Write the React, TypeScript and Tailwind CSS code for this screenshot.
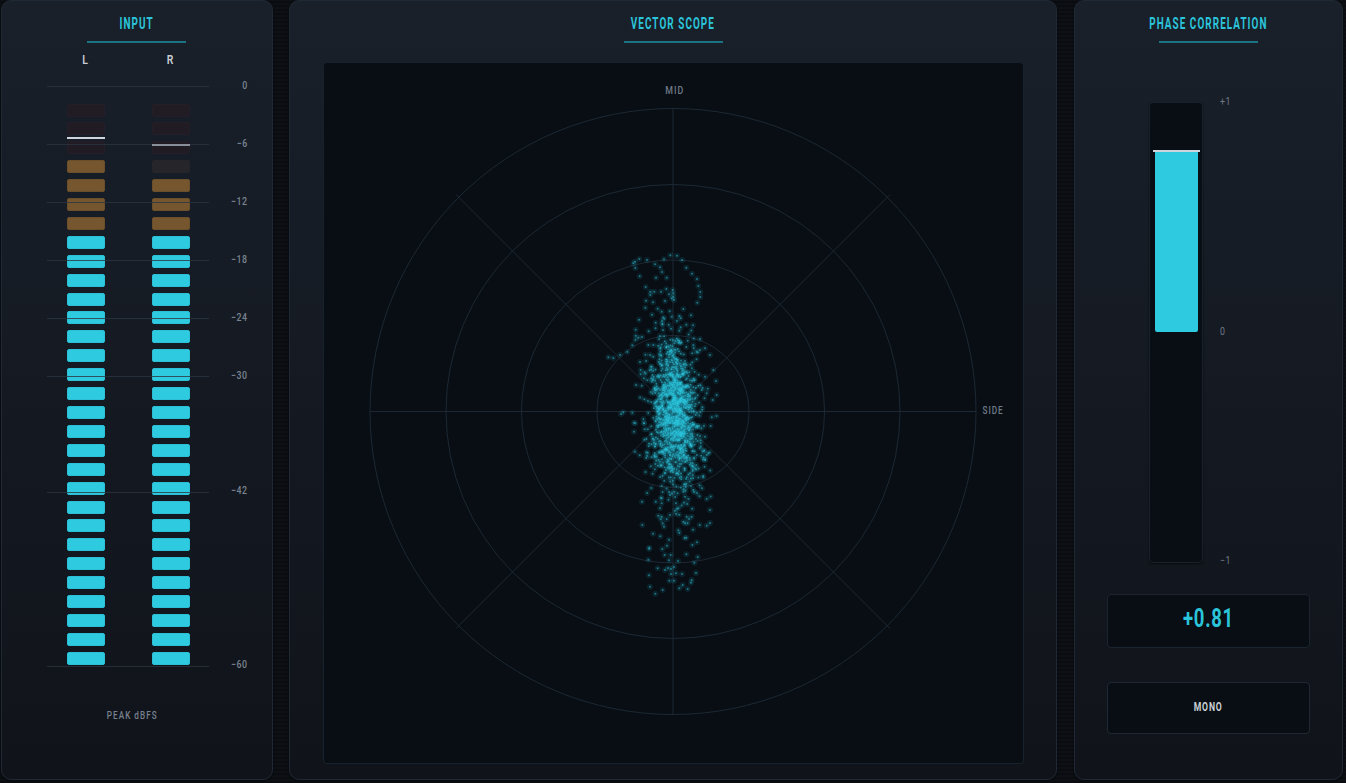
import React from "react";

const up: [number, number][] = [[130,70],[135,65],[148,57],[171,60],[136,84],[222,58],[241,46],[261,47],[276,60],[195,73],[210,82],[216,96],[198,113],[230,113],[149,109],[289,83],[306,101],[321,117],[325,138],[331,156],[331,171],[322,188],[167,141],[181,155],[181,165],[193,155],[213,155],[229,147],[237,163],[248,150],[250,160],[250,170],[252,180],[245,175],[225,183],[168,182],[189,187],[166,203],[203,206],[215,215],[239,214],[280,207],[186,224],[268,228],[272,235],[303,226],[147,239],[223,236],[216,243],[197,248],[236,254],[289,254],[309,256],[272,262],[268,272],[137,269],[176,274],[219,270],[137,287],[145,293],[156,291],[136,300],[127,316],[112,336],[90,345],[55,352],[70,354],[150,366],[152,390],[152,403],[185,380],[190,392],[155,437],[172,421],[185,425],[330,297],[360,345],[370,390],[378,423],[380,465],[368,480],[100,517],[127,518],[93,522],[310,315],[345,325],[330,330],[320,335],[180,345],[190,350],[175,315],[190,315],[345,410],[335,450],[350,460]];
const down: [number, number][] = [[156,245],[157,315],[189,341],[211,349],[237,359],[178,383],[177,386],[217,387],[231,377],[224,405],[242,405],[175,419],[237,421],[264,423],[289,403],[323,411],[313,428],[307,375],[321,367],[284,354],[289,353],[265,331],[268,339],[309,329],[329,315],[350,317],[360,309],[350,237],[360,270],[203,445],[225,450],[234,444],[243,447],[252,441],[243,462],[258,460],[276,462],[318,459],[177,466],[238,482],[252,482],[305,480],[303,488],[278,495],[268,505],[293,507],[180,500],[218,510],[196,521],[305,290],[290,290],[280,305],[285,310],[293,310],[297,297],[215,290],[212,298],[218,310],[222,320],[230,298],[240,285],[258,282],[268,284],[210,265],[215,250],[215,235],[240,225],[258,250],[265,265],[292,252],[285,230],[263,220],[280,215],[310,210],[336,205],[340,172],[350,105],[342,92],[345,50],[342,17],[135,95],[132,35],[132,8]];

function makeDots() {
  let s = 12345;
  const r = () => {
    s = (s * 1664525 + 1013904223) >>> 0;
    return s / 4294967296;
  };
  const g = () => (r() + r() + r() + r() - 2) * 1.73;
  const pts: [number, number][] = [];
  up.forEach(([x, y]) => pts.push([590 + x / 3, 240 + y / 3]));
  down.forEach(([x, y]) => pts.push([590 + x / 3, 420 + y / 3]));
  const add = (n: number, mx: number, my: number, sx: number, sy: number) => {
    for (let i = 0; i < n; i++) {
      const x = mx + g() * sx;
      const y = my + g() * sy;
      if (Math.abs(x - 675) < 43) pts.push([x, y]);
    }
  };
  add(620, 675, 415, 12, 24);
  add(210, 672, 368, 10, 18);
  add(240, 678, 458, 14, 20);
  add(110, 675, 412, 19, 24);
  return pts;
}
const dots = makeDots();

function seg(i: number, ch: "L" | "R") {
  if (i < 3) return "bg-[#211c24] border-[#231e27]";
  if (i === 3) {
    return ch === "L" ? "bg-[#75562e] border-[#6b4f2b]" : "bg-[#25252a] border-[#25252a]";
  }
  if (i < 7) return "bg-[#75562e] border-[#6b4f2b]";
  return "bg-[#2dcae0] border-[#2bc0d6]";
}

function Column({ ch }: { ch: "L" | "R" }) {
  return (
    <div className="flex flex-col gap-[5.92px] w-[38px]">
      {Array.from({ length: 30 }).map((_, i) => (
        <div key={i} className={`h-[13px] rounded-[2px] border ${seg(i, ch)}`} />
      ))}
    </div>
  );
}

function Title({ children }: { children: React.ReactNode }) {
  return (
    <div className="flex flex-col items-center pt-[14px]">
      <div className="h-[18px] text-[16px] leading-[18px] font-bold tracking-[1.7px] text-[#2bc4da] whitespace-nowrap scale-x-[0.62]">{children}</div>
      <div className="mt-[8px] w-[99px] h-[1.5px] bg-[#1b7483]" />
    </div>
  );
}

const panel = "rounded-[10px] border border-[#1f2935] bg-gradient-to-b from-[#19202a] to-[#10131a] shadow-[0_1px_2px_rgba(0,0,0,0.6)]";
const lines = [86, 144, 202, 260, 318, 376, 492, 665.5];
const labels: [string, number][] = [["0", 85], ["-6", 143], ["-12", 201], ["-18", 259], ["-24", 317], ["-30", 375], ["-42", 490], ["-60", 664]];

export default function App() {
  const cx = 349;
  const cy = 348.5;
  const ln = "#1d2833";
  return (
    <div className="font-['Roboto',sans-serif] w-[1346px] h-[783px] overflow-hidden flex gap-[16.5px] pl-[1px] bg-[#0a0c10] bg-[repeating-linear-gradient(0deg,#0a0c10_0px,#0a0c10_2px,#0d1015_2px,#0d1015_4px)]">
      <section className={`${panel} relative w-[271.5px] h-[780px] shrink-0`}>
        <Title>INPUT</Title>
        <div className="flex pl-[64px] gap-[47px] mt-[9px] h-[16px]">
          <div className="w-[38px] text-center text-[13px] leading-[16px] font-semibold text-[#c8cdd4] scale-x-[0.8]">L</div>
          <div className="w-[38px] text-center text-[13px] leading-[16px] font-semibold text-[#c8cdd4] scale-x-[0.8]">R</div>
        </div>
        <div className="flex pl-[65px] gap-[47px] mt-[36px]">
          <Column ch="L" />
          <Column ch="R" />
        </div>
        <div className="mt-[44px] -ml-[9px] text-center text-[11px] leading-[14px] tracking-[1.4px] font-medium text-[#78828f] scale-x-[0.74]">PEAK dBFS</div>

        {lines.map((y) => (
          <div key={y} className="absolute left-[45px] w-[162px] h-[1px] bg-[#2a3540]/80" style={{ top: y - 1 }} />
        ))}
        {labels.map(([t, y]) => (
          <div key={t} className="absolute right-[24px] text-[11px] leading-[12px] tracking-[0.6px] font-medium text-[#7a8491] origin-right scale-x-[0.8]" style={{ top: y - 6 }}>
            {t.replace("-", "\u2212")}
          </div>
        ))}
        <div className="absolute left-[65px] top-[136px] w-[38px] h-[2px] bg-[#cfd5dc]" />
        <div className="absolute left-[150px] top-[143px] w-[38px] h-[2px] bg-[#8a9099]" />
      </section>

      <section className={`${panel} w-[768px] h-[780px] shrink-0 flex flex-col`}>
        <Title>VECTOR SCOPE</Title>
        <div className="mt-[19.5px] ml-[33px] w-[701px] h-[702px] rounded-[4px] border border-[#18222c] bg-[#080e14] relative">
          <svg width="699" height="700" viewBox="0 0 699 700" className="block">
            {[76, 151.5, 227, 303].map((r) => (
              <circle key={r} cx={cx} cy={cy} r={r} fill="none" stroke={ln} strokeWidth="1" />
            ))}
            <line x1={cx} y1={cy - 303} x2={cx} y2={cy + 303} stroke={ln} />
            <line x1={cx - 303} y1={cy} x2={cx + 303} y2={cy} stroke={ln} />
            <line x1={cx - 217} y1={cy - 217} x2={cx + 217} y2={cy + 217} stroke={ln} />
            <line x1={cx + 217} y1={cy - 217} x2={cx - 217} y2={cy + 217} stroke={ln} />
            <g transform="translate(-324 -63)">
              {dots.map(([x, y], i) => (
                <circle key={"h" + i} cx={x} cy={y} r="3" fill="#2dcae0" opacity="0.11" />
              ))}
              {dots.map(([x, y], i) => (
                <circle key={"c" + i} cx={x} cy={y} r="1" fill="#2dcae0" opacity="0.5" />
              ))}
            </g>
          </svg>
          <div className="absolute left-[339px] top-[22px] text-[11px] leading-[12px] tracking-[1.2px] font-medium text-[#6f7a87] scale-x-[0.8]">MID</div>
          <div className="absolute left-[655px] top-[342px] text-[11px] leading-[12px] tracking-[1.2px] font-medium text-[#6f7a87] scale-x-[0.75]">SIDE</div>
        </div>
      </section>

      <section className={`${panel} relative w-[269.5px] h-[780px] shrink-0 flex flex-col`}>
        <Title>PHASE CORRELATION</Title>
        <div className="relative mt-[59.5px] ml-[74.5px] w-[53.5px] h-[461px] rounded-[4px] border border-[#18222c] bg-[#080e14] shadow-[0_1px_2px_rgba(0,0,0,0.6)]">
          <div className="absolute left-[4.5px] top-[49px] w-[43px] h-[180px] rounded-b-[2px] bg-[#2dcae0]" />
          <div className="absolute left-[2.5px] top-[47px] w-[47px] h-[2px] bg-[#cdd4dc]" />
          <div className="absolute left-[69.5px] -top-[7px] text-[11px] leading-[12px] tracking-[0.6px] text-[#6f7a87] origin-left scale-x-[0.8]">+1</div>
          <div className="absolute left-[69.5px] top-[223px] text-[11px] leading-[12px] tracking-[0.6px] text-[#6f7a87] origin-left scale-x-[0.8]">0</div>
          <div className="absolute left-[69.5px] top-[452px] text-[11px] leading-[12px] tracking-[0.6px] text-[#6f7a87] origin-left scale-x-[0.8]">{"\u22121"}</div>
        </div>
        <div className="mt-[30.5px] mx-[32px] h-[54px] rounded-[4px] border border-[#1b2530] bg-[#080e14] flex items-center justify-center pb-[3px]">
          <span className="text-[25px] font-bold tracking-[1px] text-[#2bc4da] scale-x-[0.74]">+0.81</span>
        </div>
        <div className="mt-[34px] mx-[32px] h-[52px] rounded-[4px] border border-[#1f2935] bg-[#080e14] flex items-center justify-center pb-[2px]">
          <span className="text-[12px] font-bold tracking-[1.2px] text-[#c8cdd4] scale-x-[0.72]">MONO</span>
        </div>
      </section>
    </div>
  );
}
